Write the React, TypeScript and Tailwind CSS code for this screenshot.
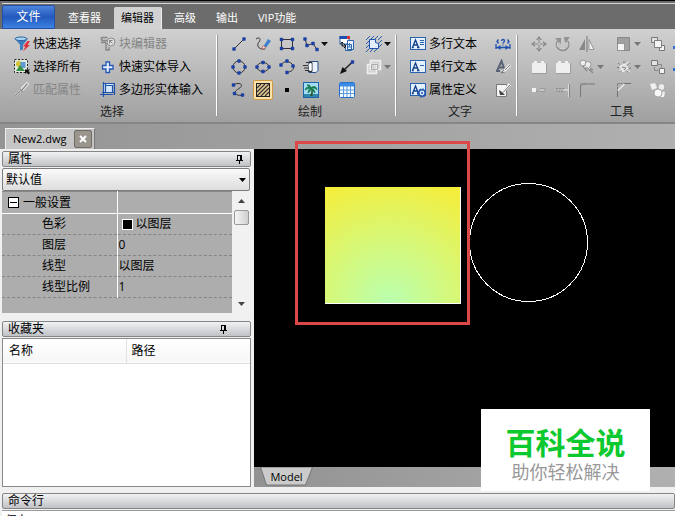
import { useState } from "react";
import type { ReactNode } from "react";

type ChildrenProps = { children: ReactNode };

const ribbonTabs = ["查看器", "编辑器", "高级", "输出", "VIP功能"];

const properties = [
  { name: "图层", value: "0" },
  { name: "线型", value: "以图层" },
  { name: "线型比例", value: "1" },
];

function Icon({ children }: ChildrenProps) {
  return (
    <svg aria-hidden="true" className="size-4 shrink-0" fill="none" viewBox="0 0 16 16">
      {children}
    </svg>
  );
}

function Dots({ points }: { points: number[][] }) {
  return (
    <>
      {points.map(([x, y]) => (
        <rect key={`${x}-${y}`} x={x - 1.7} y={y - 1.7} width="3.400" height="3.400" rx="0.8" fill="#1c3fa4" />
      ))}
    </>
  );
}

function Arrow({ disabled = false }: { disabled?: boolean }) {
  return (
    <svg aria-hidden="true" className="ml-0.5 h-1 w-[7px] shrink-0" viewBox="0 0 7 4">
      <path d="M0 0h7L3.500 4z" fill={disabled ? "#777" : "#111"} />
    </svg>
  );
}

function Tool({ label, children, active = false }: ChildrenProps & { label: string; active?: boolean }) {
  return (
    <button
      aria-label={label}
      type="button"
      className={
        active
          ? "-mx-0.5 flex size-5 items-center justify-center rounded-xs border border-[#d09a45] bg-[#fbe3ab]"
          : "flex h-5 items-center"
      }
    >
      {children}
    </button>
  );
}

function LabelTool({ label, children, disabled = false }: ChildrenProps & { label: string; disabled?: boolean }) {
  return (
    <button
      type="button"
      disabled={disabled}
      className="flex h-5 items-center gap-[3px] whitespace-nowrap text-black disabled:text-[#858585]"
    >
      {children}
      {label}
    </button>
  );
}

function Group({ title, columns, children }: ChildrenProps & { title: string; columns: string }) {
  return (
    <section className="shrink-0 pl-[13px] pr-1.5 pt-[3px]">
      <div className={`grid auto-rows-[23px] items-center ${columns}`}>{children}</div>
      <h2 className="h-5 text-center leading-[22px] text-[#222]">{title}</h2>
    </section>
  );
}

function Divider() {
  return <div className="my-1.5 w-0.5 shrink-0 border-r border-[#999] bg-white" />;
}

function TextBox({ children }: { children?: ReactNode }) {
  return (
    <Icon>
      <rect x="0.500" y="1.500" width="15" height="12" fill="#e4f0fb" stroke="#2b62ae" />
      <path d="M2.500 11.500L5.500 4l3 7.500M3.500 9h4M1.800 11.500h2M7 11.500h2.500" stroke="#123f8c" strokeWidth="1.300" />
      {children}
    </Icon>
  );
}

function SelectGroup() {
  return (
    <Group title="选择" columns="grid-cols-[86px_110px]">
      <LabelTool label="快速选择">
        <Icon>
          <path d="M1 2.500L6 9v5.500l3-1V9l5-6.500z" fill="#3c7ec0" />
          <ellipse cx="7" cy="2.800" rx="6" ry="1.800" fill="#a9d3ef" stroke="#2b62a0" />
          <path d="M13.500 5L9 10.500h2.500L9 15.500l7-6.500h-2.500L16 5z" fill="#e0303a" />
        </Icon>
      </LabelTool>
      <LabelTool label="块编辑器" disabled>
        <Icon>
          <path d="M1 1.500l1 3h5M1 6.500h5M1.500 1.500h6M6 7v7h3v-3" stroke="#858585" strokeWidth="1.400" />
          <circle cx="11" cy="6" r="4" fill="#ddd" stroke="#8c8c8c" />
          <path d="M9.500 4.500l3 3M9.500 7.500v-3h3" stroke="#858585" />
        </Icon>
      </LabelTool>
      <LabelTool label="选择所有">
        <Icon>
          <rect x="0.500" y="0.500" width="13" height="13" fill="#e4ebe0" stroke="#222" strokeDasharray="2 1.500" />
          <circle cx="5" cy="5" r="3" fill="#d3c23a" />
          <rect x="6.500" y="3" width="5" height="6" fill="#5d9ad6" />
          <path d="M2 12l4-6 5 6z" fill="#399345" />
          <path d="M11 10.500h5l-1.500 1.500 1.500 2-1.500 1.500-2-2-1.500 1.500z" fill="#111" />
        </Icon>
      </LabelTool>
      <LabelTool label="快速实体导入">
        <Icon>
          <path d="M6 3h3.500v3.500H13V10H9.500v3.500H6V10H2.500V6.500H6z" fill="#e6effb" stroke="#2457b4" strokeWidth="1.300" />
        </Icon>
      </LabelTool>
      <LabelTool label="匹配属性" disabled>
        <Icon>
          <path d="M13 1L8 6l-2 3 3-1 5-6zM7 8l-6 6" stroke="#e6e6e6" strokeWidth="2" />
          <path d="M13.500 1.500L8 8M6 9l-5 5M6 7l2.500 3" stroke="#8c8c8c" strokeWidth="1.300" />
        </Icon>
      </LabelTool>
      <LabelTool label="多边形实体输入">
        <Icon>
          <rect x="4" y="2" width="9" height="9" fill="#d5e6fa" />
          <path d="M3.500 0v15M0 12.500h13M5.500 2v9M2 10.500h12M3.500 1.500h11V13M5.500 3.500h7v7" stroke="#1e54ad" strokeWidth="1.200" />
        </Icon>
      </LabelTool>
    </Group>
  );
}

function DrawGroup() {
  return (
    <Group title="绘制" columns="grid-cols-[24px_24px_24px_36px_27px_23px]">
      <Tool label="直线">
        <Icon>
          <path d="M3 13L13 3" stroke="#333" />
          <Dots points={[[3, 13], [13, 3]]} />
        </Icon>
      </Tool>
      <Tool label="手绘">
        <Icon>
          <path d="M1 3c4-3 5 1 3 3s-2 6 3 7h3" stroke="#333" />
          <path d="M8 11l5-8 3 2-6 8z" fill="#3f7fd0" />
          <path d="M7 13l1-3.500 3 2z" fill="#f4efe6" stroke="#c66" strokeWidth="0.800" />
        </Icon>
      </Tool>
      <Tool label="矩形">
        <Icon>
          <path d="M2.500 3.500h11v9h-11z" stroke="#333" />
          <Dots points={[[2.5, 3.5], [13.5, 3.5], [2.5, 12.5], [13.5, 12.5]]} />
        </Icon>
      </Tool>
      <Tool label="多段线">
        <Icon>
          <path d="M2 3l2 6.500 6-2 4 6" stroke="#333" />
          <Dots points={[[2, 3], [4, 9.5], [10, 7.5], [14, 13.5]]} />
        </Icon>
        <Arrow />
      </Tool>
      <Tool label="插入块">
        <Icon>
          <rect x="1" y="1" width="9" height="7" fill="#fff" stroke="#2b62ae" />
          <path d="M.500 0h10v3H.500z" fill="#1d4fae" />
          <path d="M8 0h3v3H8z" fill="#d33" />
          <path d="M8.500 4.500h6v9h-6zM6.500 8.500h6v6h-6z" fill="#e9f2fc" stroke="#2b62ae" />
          <path d="M10.500 7v4M8.500 11h4" stroke="#3c79c4" />
          <path d="M3 6v4h4M5 8l2 2-2 2M1.500 7.500L3 6l1.500 1.500" stroke="#111" />
        </Icon>
      </Tool>
      <Tool label="面域">
        <Icon>
          <path d="M0 4l4-4M4 4l4-4M8 4l4-4M12 4l4-4M0 8l4-4M0 12l4-4M0 16l4-4M4 16l4-4M8 16l4-4M12 12l4-4M12 8l4-4" stroke="#2c5ca8" />
          <path d="M3.500 3.500h6v3l3 1v5h-9z" fill="#e2eefb" stroke="#1e54ad" />
        </Icon>
        <Arrow />
      </Tool>

      <Tool label="圆">
        <Icon>
          <circle cx="8" cy="8" r="6" stroke="#333" />
          <Dots points={[[8, 2], [8, 14], [2, 8], [14, 8]]} />
        </Icon>
      </Tool>
      <Tool label="椭圆">
        <Icon>
          <ellipse cx="8" cy="8" rx="6" ry="4.500" stroke="#333" />
          <Dots points={[[8, 3.5], [8, 12.5], [2, 8], [14, 8]]} />
        </Icon>
      </Tool>
      <Tool label="圆弧">
        <Icon>
          <path d="M2 6C5 1 12 2 14 6.500S12 12.500 8 13.500" stroke="#333" />
          <Dots points={[[2, 6], [8, 2], [14, 7], [8, 13.5]]} />
        </Icon>
      </Tool>
      <Tool label="多重复制">
        <Icon>
          <path d="M6 2.500h9v9l-2 2H6z" fill="#e9f2fc" stroke="#2b4f86" />
          <path d="M3 3.500h6v9H5M0 6.500h5M1 9h5M2 11.500h4" stroke="#333" />
          <path d="M6 5h2.500v6H6z" fill="#fff" />
        </Icon>
      </Tool>
      <Tool label="引线">
        <Icon>
          <path d="M14 2.500L5 11" stroke="#222" strokeWidth="1.500" />
          <path d="M1 15l2.500-7L8 12z" fill="#111" />
          <Dots points={[[13.5, 3]]} />
        </Icon>
      </Tool>
      <Tool label="遮罩">
        <Icon>
          <path d="M4.500 1.500h10v9h-10zM1.500 5.500h9v9h-9z" fill="#d5d5d5" stroke="#f0f0f0" strokeWidth="1.500" />
          <path d="M5.500 5.500h6v5h-6z" stroke="#aaa" />
        </Icon>
        <Arrow disabled />
      </Tool>

      <Tool label="样条曲线">
        <Icon>
          <path d="M3 2.500c7-3 10 1 5 4s-7 7 4 7" stroke="#333" />
          <Dots points={[[2.5, 3], [3.5, 11.5], [11.5, 13]]} />
        </Icon>
      </Tool>
      <Tool label="填充" active>
        <Icon>
          <rect x="1.500" y="1.500" width="13" height="13" fill="#e9cc91" stroke="#222" />
          <path d="M2 6l4-4M2 10l8-8M2 14L14 2M6 14l8-8M10 14l4-4" stroke="#333" strokeWidth="1.200" />
        </Icon>
      </Tool>
      <Tool label="点">
        <Icon>
          <rect x="6" y="6" width="4" height="4" fill="#000" />
        </Icon>
      </Tool>
      <Tool label="图像">
        <Icon>
          <rect x="0.500" y="0.500" width="15" height="15" fill="#a5ddf5" stroke="#1e65a7" />
          <path d="M1 12h14v3H1z" fill="#3186ae" />
          <path d="M8 6c1 3 0 5-1 8h2.500c.500-3 .500-5-.500-8" fill="#2b5a2c" />
          <path d="M8 6C5 4 3 5 2 8c3-2 4-1 6-2-2 1-3 3-3 5 2-1 3-3 3-5 1 2 2 4 4 5 0-2-1-4-4-5 3 0 4 0 6 2 0-3-3-5-6-2 0-2-2-4-4-3z" fill="#137b49" stroke="#137b49" strokeWidth="0.700" />
        </Icon>
      </Tool>
      <Tool label="表格">
        <Icon>
          <rect x="0.500" y="0.500" width="15" height="15" rx="1" fill="#f6faff" stroke="#2470cb" />
          <path d="M1 1h14v3.500H1z" fill="#3b8ae6" />
          <path d="M1 8h14M1 11.500h14M4.500 4v11M8 4v11M11.500 4v11" stroke="#5b9ce2" />
        </Icon>
      </Tool>
    </Group>
  );
}

function TextGroup() {
  return (
    <Group title="文字" columns="grid-cols-[85px_15px]">
      <LabelTool label="多行文本">
        <TextBox>
          <path d="M10 4.500h4M10 6.500h4M10 8.500h4" stroke="#2b62ae" />
        </TextBox>
      </LabelTool>
      <Tool label="标注">
        <Icon>
          <path d="M1 8v5M15 8v5M1 11.500h14" stroke="#1d4fae" strokeWidth="1.300" />
          <path d="M5.500 9v5L2 11.500zM10.500 9v5l3.500-2.500z" fill="#1d4fae" />
          <path d="M6.500 5c0-2 3-2 3 0 0 1-1.500 1-1.500 2.500M8 8.500v1M3.500 3.500L2 5.500l1.500 2M12.500 3.500l1.500 2-1.500 2" stroke="#1d4fae" strokeWidth="1.300" />
        </Icon>
      </Tool>
      <LabelTool label="单行文本">
        <TextBox>
          <path d="M10 6.500h4" stroke="#2b62ae" />
        </TextBox>
      </LabelTool>
      <Tool label="文字样式">
        <Icon>
          <path d="M2 12L6.500 2 10 12M4 8.500h5M1 12h4" stroke="#596577" strokeWidth="2" />
          <path d="M15 6l-7 7" stroke="#eee" strokeWidth="3" />
          <path d="M15 6l-5 5M9 11l-3 3 4-1" stroke="#777" />
        </Icon>
      </Tool>
      <LabelTool label="属性定义">
        <TextBox>
          <circle cx="12" cy="11" r="3.200" fill="#dceafa" stroke="#1e54ad" strokeWidth="1.500" />
          <circle cx="12" cy="11" r="4.200" stroke="#1e54ad" strokeDasharray="1.600 1.700" />
          <circle cx="12" cy="11" r="1" fill="#1e54ad" />
        </TextBox>
      </LabelTool>
      <Tool label="编辑文字">
        <Icon>
          <path d="M1.500 2.500h10v12h-10z" fill="#f4f4f4" stroke="#777" />
          <path d="M4 8l1 5h5l-3-3z" fill="#444" />
          <path d="M15 2L8 10" stroke="#eee" strokeWidth="3" />
          <path d="M15.500 2.500L8 10.500" stroke="#777" />
        </Icon>
      </Tool>
    </Group>
  );
}

function StackIcon({ small = false }: { small?: boolean }) {
  return (
    <Icon>
      <path d="M1.500 1.500h6v5h-6z" fill="#e2e2e2" stroke="#777" />
      <path d="M9.500 9.500h5v5h-5z" fill="#f2f2f2" stroke="#777" />
      {small ? (
        <path d="M7.500 5.500h4v3M4.500 8v3.500h4" stroke="#888" />
      ) : (
        <path d="M4.500 4.500h7v7h-7z" fill="#f6f6f6" stroke="#808080" />
      )}
    </Icon>
  );
}

function BoxIcon() {
  return (
    <Icon>
      <path d="M1 4h2V2h3v2h4V2h3v2h2v10H1z" fill="#efefef" />
      <path d="M1 14.500h14.500V4" stroke="#9c9c9c" />
    </Icon>
  );
}

function ToolsGroup() {
  return (
    <Group title="工具" columns="grid-cols-[24px_24px_37px_34px_23px_40px]">
      <Tool label="移动">
        <Icon>
          <path d="M8 1v14M1 8h14" stroke="#858585" strokeWidth="2" />
          <path d="M8 0l3 4H5zM8 16l3-4H5zM0 8l4-3v6zM16 8l-4-3v6z" fill="#8c8c8c" />
          <path d="M8 3v10M3 8h10" stroke="#ddd" strokeWidth="0.800" />
        </Icon>
      </Tool>
      <Tool label="旋转">
        <Icon>
          <path d="M3 5c-3 5 1 9 5 9s7-5 4-9" stroke="#8b8b8b" strokeWidth="2.500" />
          <path d="M0 2h6v6zM9 1h6l-5 6z" fill="#929292" />
          <path d="M3 6c-2 4 1 7 5 7s6-4 4-7" stroke="#e8e8e8" />
        </Icon>
      </Tool>
      <Tool label="镜像">
        <Icon>
          <path d="M6 3v11H0z" fill="#888" />
          <path d="M10 3.500v10h5z" fill="#eee" stroke="#999" />
          <path d="M8 0v16" stroke="#777" />
        </Icon>
      </Tool>
      <Tool label="缩放">
        <Icon>
          <path d="M1.500 1.500h12v13h-12z" fill="#a0a0a0" stroke="#888" />
          <path d="M1.500 7.500h7v7h-7z" fill="#f4f4f4" stroke="#666" strokeDasharray="1 1" />
        </Icon>
        <Arrow disabled />
      </Tool>
      <Tool label="前置">
        <StackIcon />
      </Tool>
      <Tool label="测量">
        <Icon>
          <path d="M0 10h6v3H0z" fill="#2d6fd0" />
        </Icon>
      </Tool>

      <Tool label="创建块">
        <BoxIcon />
      </Tool>
      <Tool label="编辑块">
        <BoxIcon />
      </Tool>
      <Tool label="复制">
        <Icon>
          <circle cx="4" cy="4" r="3" fill="#eee" stroke="#999" />
          <circle cx="9" cy="5.500" r="3" fill="#eee" stroke="#999" />
          <path d="M4 7l4 5M9 9l5 5M11 9l3 2" stroke="#8a8a8a" strokeWidth="1.500" />
          <path d="M5 8l3-1 3 3" stroke="#eee" />
        </Icon>
        <Arrow disabled />
      </Tool>
      <Tool label="分解">
        <Icon>
          <path d="M2 4l11 10M3 13L14 4M1 8.500h3M13 9h3M8 2v3" stroke="#777" strokeDasharray="2 1" />
          <path d="M4 7l5-2 3 4-5 4zM3 12l3-2M10 5l3-2M11 11l3 2" fill="#ddd" stroke="#f2f2f2" />
          <path d="M6 8l4 1-2 2" stroke="#888" />
        </Icon>
        <Arrow disabled />
      </Tool>
      <Tool label="后置">
        <StackIcon small />
      </Tool>
      <Tool label="对齐">
        <Icon>
          <path d="M0 9h6v3H0z" fill="#2d6fd0" />
        </Icon>
      </Tool>

      <Tool label="打断">
        <Icon>
          <path d="M1 6h4v4H1z" fill="#f2f2f2" />
          <path d="M5 9.500h2M9 6.500h5v3H9" fill="#c7c7c7" stroke="#999" />
        </Icon>
      </Tool>
      <Tool label="延伸">
        <Icon>
          <path d="M1 6.500h8v3H1" stroke="#888" strokeDasharray="2 1" />
          <path d="M8 8h5" stroke="#eee" />
          <path d="M13.500 2v13" stroke="#ddd" />
          <path d="M14.500 2v13" stroke="#858585" />
        </Icon>
      </Tool>
      <Tool label="圆角">
        <Icon>
          <path d="M1.500 15V6c0-3 1-4 4-4H16" stroke="#777" />
          <path d="M1.500 6V1.500H6" stroke="#777" strokeDasharray="1 1" />
        </Icon>
      </Tool>
      <Tool label="倒角">
        <Icon>
          <path d="M1.500 15V9M9 1.500h6" stroke="#707070" />
          <path d="M1.500 9l7-7" stroke="#eee" strokeWidth="1.300" />
          <path d="M1.500 1.500H9M1.500 2v7" stroke="#777" strokeDasharray="2 1" />
        </Icon>
      </Tool>
      <Tool label="组合">
        <Icon>
          <path d="M0 2l5-1 2 5-5 2zM9 9l6 1-1 5H9z" fill="#f0f0f0" />
          <circle cx="11.500" cy="5" r="3.500" fill="#ececec" stroke="#aaa" />
          <circle cx="8" cy="11" r="4" fill="#f8f8f8" stroke="#aaa" />
        </Icon>
      </Tool>
    </Group>
  );
}

function PinButton() {
  return (
    <button type="button" aria-label="固定面板" className="flex items-center">
      <svg aria-hidden="true" className="h-[9px] w-[7px]" fill="none" viewBox="0 0 7 9" shapeRendering="crispEdges">
        <path d="M1.500 5.500v-5h4v5M4.500 0v6M0 5.500h7M3.500 6v3" stroke="#000" />
      </svg>
    </button>
  );
}

function PanelTitle({ title, pin = "" }: { title: string; pin?: string }) {
  return (
    <header className={`flex h-4 shrink-0 items-center justify-between rounded-xs border border-[#858585] bg-linear-to-b from-[#f1f2f3] to-[#bfc2c6] pl-[5px] ${pin}`}>
      <h2 className="leading-4 text-black">{title}</h2>
      {pin ? <PinButton /> : null}
    </header>
  );
}

function PropertiesPanel() {
  return (
    <section>
      <PanelTitle title="属性" pin="pr-[7px]" />
      <div className="relative mr-px mt-px">
        <select
          aria-label="属性对象"
          className="block h-[23px] w-full appearance-none rounded-xs border border-[#7d7d7d] bg-linear-to-b from-[#fafafa] to-[#dedede] pl-[3px] text-black"
        >
          <option>默认值</option>
        </select>
        <svg aria-hidden="true" className="pointer-events-none absolute right-1 top-2.5 h-1 w-[7px]" viewBox="0 0 7 4">
          <path d="M0 0h7L3.500 4z" fill="#000" />
        </svg>
      </div>
      <div className="flex h-[122px] bg-[#adadad]">
        <div className="min-w-0 flex-1">
          <table className="w-full table-fixed border-collapse">
            <tbody>
              <tr className="h-[22px] border-y border-b-white border-t-[#888]">
                <th className="w-[115px] border-r border-white p-0 text-left font-normal">
                  <button type="button" className="ml-1.5 flex items-center gap-1 leading-5">
                    <svg aria-hidden="true" className="size-[11px]" viewBox="0 0 11 11" shapeRendering="crispEdges">
                      <path d="M.500.500h10v10H.500z" fill="#fff" stroke="#000" />
                      <path d="M2 5.500h7" stroke="#000" />
                    </svg>
                    一般设置
                  </button>
                </th>
                <td />
              </tr>
              <tr className="h-[21px] border-b border-dashed border-[#858585]">
                <th className="border-r border-solid border-r-white p-0 pl-10 text-left font-normal leading-5">色彩</th>
                <td className="p-0 pl-1 leading-5">
                  <span className="flex items-center gap-[3px]">
                    <span className="size-[11px] border border-white bg-black" />
                    以图层
                  </span>
                </td>
              </tr>
              {properties.map((property) => (
                <tr key={property.name} className="h-[21px] border-b border-dashed border-[#858585]">
                  <th className="border-r border-solid border-r-white p-0 pl-10 text-left font-normal leading-5">
                    {property.name}
                  </th>
                  <td className="p-0 pl-px leading-5">{property.value}</td>
                </tr>
              ))}
            </tbody>
          </table>
        </div>
        <div className="flex w-[19px] flex-col items-center bg-[#f1f1f1] pb-[7px] pt-2">
          <button type="button" aria-label="向上滚动">
            <svg aria-hidden="true" className="block h-1 w-[7px]" viewBox="0 0 7 4">
              <path d="M0 4h7L3.500 0z" fill="#444" />
            </svg>
          </button>
          <div className="mt-[7px] h-[15px] w-[15px] rounded-xs border border-[#979797] bg-linear-to-r from-[#f6f6f6] to-[#cfcfcf]" />
          <button type="button" aria-label="向下滚动" className="mt-auto">
            <svg aria-hidden="true" className="block h-1 w-[7px]" viewBox="0 0 7 4">
              <path d="M0 0h7L3.500 4z" fill="#444" />
            </svg>
          </button>
        </div>
      </div>
    </section>
  );
}

function FavoritesPanel() {
  return (
    <section className="mt-2 flex min-h-0 flex-1 flex-col">
      <PanelTitle title="收藏夹" pin="pr-[23px]" />
      <div className="mt-px flex-1 border border-[#8a8a8a] bg-white">
        <table className="w-full table-fixed border-collapse">
          <thead>
            <tr className="h-6 border-b border-[#dcdcdc] bg-linear-to-b from-white to-[#f6f6f6]">
              <th className="w-[123px] border-r border-[#e2e2e2] p-0 pl-1.5 text-left font-normal">名称</th>
              <th className="p-0 pl-[5px] text-left font-normal">路径</th>
            </tr>
          </thead>
        </table>
      </div>
    </section>
  );
}

function Drawing() {
  return (
    <div className="relative min-h-0 flex-1 bg-black">
      <div className="absolute left-[71px] top-[38px] h-[117px] w-[136px] border-b border-r border-white bg-[radial-gradient(circle_at_48%_100%,#b9ffb0_0%,#d8f774_50%,#f8ed36_100%)]" />
      <svg
        aria-hidden="true"
        className="absolute left-[215px] top-[34px] size-[120px]"
        fill="none"
        viewBox="0 0 120 120"
        shapeRendering="crispEdges"
      >
        <circle cx="59.500" cy="59.500" r="59" stroke="#fff" />
      </svg>
      <div className="absolute -top-2 left-[41px] h-[184px] w-[175px] border-3 border-[#dc4747]" />
    </div>
  );
}

export default function App() {
  const [activeTab, setActiveTab] = useState("编辑器");

  return (
    <div className="relative flex h-screen flex-col overflow-hidden bg-[#f0f0f0] font-['Open_Sans','Noto_Sans_CJK_SC',sans-serif] text-xs text-black">
      <nav className="flex h-[29px] shrink-0 items-end border-t border-black bg-[#6c6c6c] pl-0.5">
        <div className="flex h-[26px] min-w-0 flex-1 items-end gap-1.5 border-t border-[#d8d8d8]">
          <button
            type="button"
            className="h-6 w-[53px] rounded-t-xs border border-[#2450a4] bg-linear-to-b from-[#4d84dc] via-[#2459bd] to-[#3c82e4] text-white"
          >
            文件
          </button>
          {ribbonTabs.map((tab) => (
            <button
              key={tab}
              type="button"
              onClick={() => setActiveTab(tab)}
              className={`h-[22px] whitespace-nowrap px-[7px] text-[11px] leading-[22px] ${
                tab === activeTab
                  ? "rounded-t-xs bg-[#d2d2d2] text-black shadow-[1px_0_0_#eee]"
                  : "text-white"
              }`}
            >
              {tab}
            </button>
          ))}
        </div>
      </nav>

      <div className="flex h-[95px] shrink-0 overflow-hidden border-b-2 border-[#858585] bg-linear-to-b from-[#d0d0d0] to-[#a0a0a0] pl-px">
        <SelectGroup />
        <Divider />
        <DrawGroup />
        <Divider />
        <TextGroup />
        <Divider />
        <ToolsGroup />
      </div>

      <div className="flex h-[25px] shrink-0 items-end bg-linear-to-r from-[#949494] to-[#b0b0b0] pl-[5px]">
        <div className="flex h-[21px] items-center gap-2 border border-b-0 border-[#eee] border-r-[#777] bg-[#c6c6c6] pl-[7px] pr-0.5">
          <span className="text-[11px]">New2.dwg</span>
          <button
            type="button"
            aria-label="关闭 New2.dwg"
            className="flex size-[18px] items-center justify-center rounded-xs border border-[#706c64] bg-[#9a968d]"
          >
            <svg aria-hidden="true" className="size-2" viewBox="0 0 8 8">
              <path d="M1 1l6 6M7 1L1 7" stroke="#fff" strokeWidth="2" />
            </svg>
          </button>
        </div>
      </div>

      <main className="flex min-h-0 flex-1">
        <aside className="flex w-[254px] shrink-0 flex-col pl-0.5 pr-[3px] pt-0.5">
          <PropertiesPanel />
          <FavoritesPanel />
        </aside>
        <div className="flex min-w-0 flex-1 flex-col">
          <Drawing />
          <div className="h-5 bg-linear-to-r from-[#929292] to-[#b0b0b0] pl-1.5">
            <button type="button" className="relative block h-[19px] w-[53px] text-[11px] leading-[17px]">
              <svg aria-hidden="true" className="absolute inset-0" viewBox="0 0 53 19">
                <path d="M.500 0l6 18h39l7-18z" fill="#cbcbcb" stroke="#777" />
              </svg>
              <span className="relative">Model</span>
            </button>
          </div>
        </div>
      </main>

      <section className="h-[29px] shrink-0 overflow-hidden pl-0.5 pt-1.5">
        <PanelTitle title="命令行" />
        <p className="mt-px border-t border-[#999] bg-white pl-[3px] leading-5">保存</p>
      </section>

      <div className="absolute bottom-[25px] right-[25px] flex h-[82px] w-[169px] flex-col items-center bg-white pt-4 font-['Noto_Sans_CJK_SC',sans-serif]">
        <p className="text-3xl font-bold leading-8 text-[#0bc92f]">百科全说</p>
        <p className="mt-0.5 text-lg leading-6 text-[#999]">助你轻松解决</p>
      </div>
    </div>
  );
}
